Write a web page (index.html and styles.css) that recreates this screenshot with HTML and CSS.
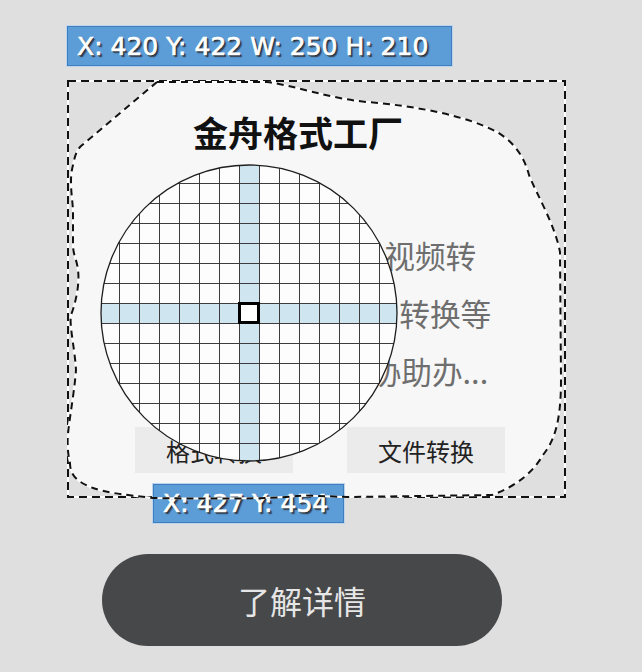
FILE: index.html
```html
<!DOCTYPE html>
<html lang="zh-CN">
<head>
<meta charset="utf-8">
<title>金舟格式工厂</title>
<link rel="stylesheet" href="styles.css">
</head>
<body>
<div class="page">
  <div class="coord coord-top">X: 420 Y: 422 W: 250 H: 210</div>

  <div class="selection">
    <svg class="frame" width="499" height="418" viewBox="0 0 499 418">
      <path class="lasso-fill" d="M 90 2 L 200 2 C 230 6 260 18 300 22 C 350 26 400 36 430 52 C 450 64 458 80 462 95 C 470 115 488 145 493 172 L 494 300 C 494 340 488 360 476 375 C 466 392 450 406 425 415 L 86 417 C 60 415 40 413 26 408 C 10 402 3 395 3 383 C 0 370 0 360 2 345 C 4 330 8 305 9 290 C 8 270 2 245 4 235 C 8 225 13 205 11 190 C 10 180 6 175 6 165 L 6 130 C 5 115 2 100 6 85 C 8 75 10 70 14 66 L 90 2 Z"/>
      <rect class="ants-base" x="1" y="1" width="497" height="416"/>
      <rect class="ants" x="1" y="1" width="497" height="416"/>
    </svg>

    <div class="content">
      <div class="title">金舟格式工厂</div>
      <div class="desc">
        <div class="line">　支持音频、图片、视频转</div>
        <div class="line line-2">换，以及文档格式的转换等</div>
        <div class="line line-3">多种实用功能，可协助办...</div>
      </div>
      <div class="actions">
        <div class="action">格式转换</div>
        <div class="action">文件转换</div>
      </div>
    </div>

    <svg class="magnifier" width="300" height="300" viewBox="0 0 300 300">
      <defs>
        <clipPath id="lens">
          <circle cx="150" cy="150" r="148"/>
        </clipPath>
        <pattern id="grid" width="20" height="20" patternUnits="userSpaceOnUse">
          <path d="M0.5 0 V20 M0 0.5 H20" class="grid-line"/>
        </pattern>
      </defs>
      <g clip-path="url(#lens)">
        <rect x="0" y="0" width="300" height="300" class="lens-bg"/>
        <rect x="140" y="0" width="20" height="300" class="band"/>
        <rect x="0" y="140" width="300" height="20" class="band"/>
        <rect x="0" y="0" width="300" height="300" fill="url(#grid)"/>
      </g>
      <rect x="140.5" y="140.5" width="19" height="19" class="cursor"/>
      <circle cx="150" cy="150" r="148" class="lens-ring"/>
    </svg>

    <div class="coord coord-bottom">X: 427 Y: 454</div>

    <svg class="lasso" width="499" height="422" viewBox="0 0 499 422">
      <path class="lasso-ants-base" d="M 90 2 L 200 2 C 230 6 260 18 300 22 C 350 26 400 36 430 52 C 450 64 458 80 462 95 C 470 115 488 145 493 172 L 494 300 C 494 340 488 360 476 375 C 466 392 450 406 425 415 L 280 417 C 250 416 240 415 230 416 C 200 419 150 419 86 418 C 60 415 40 413 26 408 C 10 402 3 395 3 383 C 0 370 0 360 2 345 C 4 330 8 305 9 290 C 8 270 2 245 4 235 C 8 225 13 205 11 190 C 10 180 6 175 6 165 L 6 130 C 5 115 2 100 6 85 C 8 75 10 70 14 66 L 90 2"/>
      <path class="lasso-ants" d="M 90 2 L 200 2 C 230 6 260 18 300 22 C 350 26 400 36 430 52 C 450 64 458 80 462 95 C 470 115 488 145 493 172 L 494 300 C 494 340 488 360 476 375 C 466 392 450 406 425 415 L 280 417 C 250 416 240 415 230 416 C 200 419 150 419 86 418 C 60 415 40 413 26 408 C 10 402 3 395 3 383 C 0 370 0 360 2 345 C 4 330 8 305 9 290 C 8 270 2 245 4 235 C 8 225 13 205 11 190 C 10 180 6 175 6 165 L 6 130 C 5 115 2 100 6 85 C 8 75 10 70 14 66 L 90 2"/>
    </svg>
  </div>

  <div class="cta">了解详情</div>
</div>
</body>
</html>
```

FILE: styles.css
```css
html, body {
  margin: 0;
  padding: 0;
}

body {
  background: #e0dfdf;
  font-family: "Noto Sans CJK SC", "Noto Sans", sans-serif;
  width: 642px;
  height: 672px;
  overflow: hidden;
}

.page {
  padding-top: 26px;
  padding-left: 67px;
  display: flex;
  flex-direction: column;
  align-items: flex-start;
}

.coord {
  box-sizing: border-box;
  background: #5c9dd8;
  border: 1px solid #3f7fbf;
  box-shadow: 0 0 0 1px #bcd4ec;
  color: #ffffff;
  font-family: "DejaVu Sans", "Liberation Sans", sans-serif;
  font-size: 25px;
  white-space: nowrap;
  -webkit-text-stroke: 0.7px #ffffff;
  text-shadow: 1px 1px 0 #1f2b38, 2px 2px 0 #3a4a5c, 2px 2px 2px rgba(0, 0, 0, 0.4);
  display: flex;
  align-items: center;
}

.coord-top {
  width: 385px;
  height: 40px;
  padding-left: 9px;
}

.selection {
  position: relative;
  width: 499px;
  height: 418px;
  margin-top: 14px;
}

.frame {
  position: absolute;
  left: 0;
  top: 0;
  z-index: 0;
}

.lasso-fill {
  fill: #f7f7f8;
}

.ants-base {
  fill: none;
  stroke: #ffffff;
  stroke-width: 2;
}

.ants {
  fill: none;
  stroke: #111111;
  stroke-width: 2;
  stroke-dasharray: 8 5;
}

.content {
  position: relative;
  z-index: 1;
  padding-top: 32px;
  display: flex;
  flex-direction: column;
}

.title {
  margin-left: 126px;
  font-size: 35px;
  line-height: 40px;
  font-weight: 700;
  color: #111111;
}

.desc {
  margin-top: 74px;
  margin-left: 41px;
  font-size: 30.7px;
  line-height: 58px;
  color: #6e6e6e;
  white-space: nowrap;
}

.line-2 {
  padding-left: 15px;
}

.line-3 {
  padding-left: 17px;
}

.actions {
  display: flex;
  gap: 54px;
  margin-left: 68px;
  margin-top: 27px;
}

.action {
  width: 158px;
  height: 46px;
  background: #ebebeb;
  color: #222222;
  font-size: 24px;
  display: flex;
  align-items: center;
  justify-content: center;
}

.magnifier {
  position: absolute;
  left: 32px;
  top: 83px;
  z-index: 2;
}

.lens-bg {
  fill: #fdfdfd;
}

.band {
  fill: #cfe5ef;
}

.grid-line {
  fill: none;
  stroke: #3c3c3c;
  stroke-width: 1;
}

.cursor {
  fill: #ffffff;
  stroke: #000000;
  stroke-width: 3;
}

.lens-ring {
  fill: none;
  stroke: #1e1e1e;
  stroke-width: 1.3;
}

.coord-bottom {
  position: absolute;
  left: 86px;
  top: 404px;
  width: 191px;
  height: 39px;
  padding-left: 9px;
  z-index: 3;
}

.lasso {
  position: absolute;
  left: 0;
  top: 0;
  z-index: 4;
  pointer-events: none;
}

.lasso-ants-base {
  fill: none;
  stroke: #ffffff;
  stroke-width: 2;
}

.lasso-ants {
  fill: none;
  stroke: #111111;
  stroke-width: 2;
  stroke-dasharray: 7 5;
}

.cta {
  margin-top: 56px;
  margin-left: 35px;
  width: 400px;
  height: 92px;
  border-radius: 46px;
  background: #47484a;
  color: #e6e6e6;
  font-size: 32px;
  display: flex;
  align-items: center;
  justify-content: center;
}
```
